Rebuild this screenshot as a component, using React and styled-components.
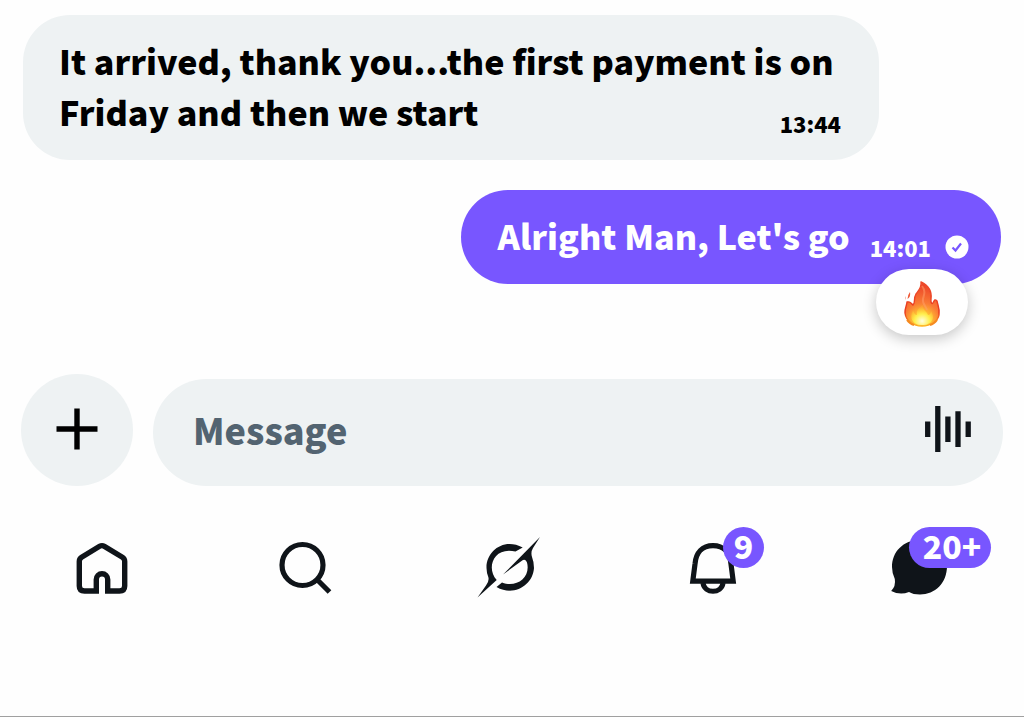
import React from 'react';
import styled, { createGlobalStyle, css } from 'styled-components';

const color = {
  page: '#fefefe',
  surface: '#eef2f3',
  ink: '#0f1419',
  muted: '#536471',
  accent: '#7856ff',
};

const GlobalStyle = createGlobalStyle`
  *, *::before, *::after { box-sizing: border-box; }
  body {
    margin: 0;
    background: ${color.page};
    font-family: 'Noto Sans CJK SC', 'Noto Sans', sans-serif;
    font-weight: 900;
  }
`;

const Page = styled.main`
  display: flex;
  flex-direction: column;
  min-height: 100vh;
  padding-top: 15px;
  border-bottom: 1px solid #a0a0a0;
`;

const Thread = styled.section`
  display: flex;
  flex-direction: column;
  gap: 30px;
  padding: 0 23px;
`;

const Bubble = styled.article`
  position: relative;
  border-radius: 47px;
  font-size: 34px;
  line-height: 51px;
  ${({ $sent }) =>
    $sent
      ? css`
          align-self: flex-end;
          display: flex;
          align-items: flex-start;
          gap: 20px;
          padding: 20px 32px 22px 37px;
          background: ${color.accent};
          color: #fff;
        `
      : css`
          align-self: flex-start;
          display: flow-root;
          max-width: 856px;
          padding: 20px 38px 22px 36px;
          background: ${color.surface};
          color: #000;
        `}
`;

const BubbleText = styled.p`
  display: inline;
  margin: 0;
`;

const Meta = styled.div`
  float: right;
  display: flex;
  align-items: center;
  gap: 14px;
  margin-top: 22px;
  font-size: 22px;
  line-height: 30px;
`;

const Reaction = styled.button`
  position: absolute;
  right: 33px;
  bottom: -51px;
  display: grid;
  place-items: center;
  width: 92px;
  height: 66px;
  padding: 3px 0 0;
  border: 0;
  border-radius: 33px;
  background: #fff;
  box-shadow: 0 4px 14px rgba(0, 0, 0, 0.22);
`;

const Composer = styled.form`
  display: flex;
  align-items: flex-end;
  gap: 20px;
  margin-top: 90px;
  padding: 0 21px;
`;

const AddButton = styled.button`
  flex: none;
  display: grid;
  place-items: center;
  width: 112px;
  height: 112px;
  padding: 0 0 2px;
  border: 0;
  border-radius: 50%;
  background: ${color.surface};
  color: #000;
`;

const Field = styled.div`
  flex: 1;
  min-width: 0;
  display: flex;
  align-items: center;
  height: 107px;
  padding: 0 32px 7px 40px;
  border-radius: 54px;
  background: ${color.surface};
`;

const MessageInput = styled.input`
  flex: 1;
  min-width: 0;
  height: 54px;
  padding: 0;
  border: 0;
  outline: 0;
  background: transparent;
  color: ${color.ink};
  font: inherit;
  font-size: 36px;
  &::placeholder {
    color: ${color.muted};
    opacity: 1;
  }
`;

const VoiceButton = styled.button`
  display: grid;
  padding: 0;
  border: 0;
  background: none;
  color: ${color.ink};
`;

const TabBar = styled.nav`
  display: grid;
  grid-template-columns: repeat(5, 1fr);
  justify-items: center;
  margin-top: 54px;
  padding-right: 4px;
`;

const Tab = styled.a`
  position: relative;
  display: block;
  height: 60px;
  color: ${color.ink};
`;

const Badge = styled.span`
  position: absolute;
  top: -13px;
  left: ${({ $wide }) => ($wide ? 19 : 37)}px;
  display: block;
  width: ${({ $wide }) => ($wide ? 82 : 41)}px;
  height: 41px;
  padding-left: ${({ $wide }) => ($wide ? 4 : 0)}px;
  border-radius: 21px;
  background: ${color.accent};
  color: #fff;
  font-size: 32px;
  line-height: 36px;
  text-align: center;
`;

const Icon = styled.svg`
  display: block;
  overflow: visible;
`;

const CheckIcon = () => (
  <Icon width="24" height="24" viewBox="0 0 24 24" role="img" aria-label="Read">
    <circle cx="12" cy="12" r="11.5" fill="#fff" />
    <path d="M7.500 12.500l3 3 5.500-7" fill="none" stroke={color.accent} strokeWidth="2.2" />
  </Icon>
);

const FireIcon = () => (
  <Icon width="36" height="46" viewBox="0 0 36 46" role="img" aria-label="Fire">
    <defs>
      <radialGradient id="flame" cx="18" cy="40" r="36" gradientUnits="userSpaceOnUse">
        <stop offset="0" stopColor="#fff36b" />
        <stop offset="0.25" stopColor="#ffbd33" />
        <stop offset="0.5" stopColor="#fa7c35" />
        <stop offset="1" stopColor="#ec4429" />
      </radialGradient>
      <linearGradient id="edge" x1="0" y1="0" x2="0" y2="1">
        <stop offset="0" stopColor="#ee4b2b" />
        <stop offset="0.7" stopColor="#e93a1e" />
        <stop offset="1" stopColor="#ffb41f" />
      </linearGradient>
      <radialGradient id="core" cx="0.5" cy="0.8" r="0.7">
        <stop offset="0" stopColor="#fffde0" />
        <stop offset="0.5" stopColor="#fff04f" />
        <stop offset="1" stopColor="#ffc52f" stopOpacity="0.2" />
      </radialGradient>
    </defs>
    <path
      d="M17 1C25 5 28 11 27 18C26.500 22 28 24 29.500 21C30.500 19 31 18 33 20C34 25 36 28 35 34C34 40 27 45 18 45C9 45 2 40 1 32C.500 28 3 24 3 21C7 20 7 23 9 24C12 21 9 18 12 13C15 9 18 6 17 1Z"
      fill="url(#flame)"
      stroke="url(#edge)"
      strokeWidth="1.4"
      strokeLinejoin="round"
    />
    <path d="M18 5C22 10 20 14 19 18C18 23 22 25 23 29" fill="none" stroke="#ffa06c" strokeWidth="2" opacity="0.5" />
    <path
      d="M19 24C18 29 23 30 24 34C26 34 27 32 27 30C32 38 27 44 18 44C8 44 5 37 9 29C10 32 11 34 13 34C12 29 15 27 19 24Z"
      fill="url(#core)"
    />
    <path d="M6 11Q3.500 14 3.500 18Q7 16 6 11ZM2 15Q1 17 2 19Z" fill="#ef5a38" />
    <path d="M3 39Q6 43 10 44M33 39Q30 43 26 44" fill="none" stroke="#f58a20" strokeWidth="2" />
  </Icon>
);

const PlusIcon = () => (
  <Icon width="42" height="42" viewBox="0 0 42 42" aria-hidden="true">
    <path d="M21 0.500V41.500M0.500 21H41.500" stroke="currentColor" strokeWidth="5.4" />
  </Icon>
);

const VoiceIcon = () => (
  <Icon width="46" height="46" viewBox="0 0 46 46" aria-hidden="true">
    <path
      d="M2.700 15.500V31M12.800 0V46M22.900 10.500V36M33 5.200V41M43.200 15.500V31"
      fill="none"
      stroke="currentColor"
      strokeWidth="5.3"
    />
  </Icon>
);

const HomeIcon = () => (
  <Icon width="56" height="56" viewBox="0 0 56 56" aria-hidden="true">
    <path
      d="M22.300 51H10.500Q5.300 51 5.300 46V21.500Q5.300 18.800 7.600 17.300L25.600 6.300Q28 4.900 30.400 6.300L48.400 17.300Q50.700 18.800 50.700 21.500V46Q50.700 51 45.500 51H33.700V39.500A5.700 5.700 0 0 0 22.300 39.500Z"
      fill="none"
      stroke="currentColor"
      strokeWidth="5.400"
    />
  </Icon>
);

const SearchIcon = () => (
  <Icon width="56" height="56" viewBox="0 0 56 56" aria-hidden="true">
    <circle cx="24.500" cy="25" r="20.500" fill="none" stroke="currentColor" strokeWidth="5.2" />
    <path d="M39 39.500L51.500 52" stroke="currentColor" strokeWidth="5.2" />
  </Icon>
);

const GrokIcon = () => (
  <Icon width="64" height="62" viewBox="18 20 64 62" aria-hidden="true">
    <g fill="currentColor">
      <path d="M62.700 27.500C44 17 26 31 26.500 48Q26.600 53 28.300 57Q29.500 61 26 65.500L17.500 77.500L36.700 60C26 49 33 26 55.500 31.500Z" />
      <path d="M80 17L43 54.500L61.500 41Q65.500 38 67 42.500C71 58 56 68 42 62.500L36.500 67C54 77 73 65 74 48Q74 42 72 37Q70.500 32 73 28Z" />
    </g>
  </Icon>
);

const BellIcon = () => (
  <Icon width="56" height="56" viewBox="1 0 56 56" aria-hidden="true">
    <g fill="none" stroke="currentColor" strokeWidth="5.2">
      <path d="M7.800 41.100L10 24C10.800 12.500 17.500 5.600 28 5.600S45.200 12.500 46 24L48.200 41.100Z" />
      <path d="M18 43C19.500 54 36.500 54 38 43" />
    </g>
  </Icon>
);

const ChatIcon = () => (
  <Icon width="56" height="56" viewBox="20 24 56 56" aria-hidden="true">
    <path
      d="M50 24C66 24 77 35 77 50C77 67 65 78.500 50 78.500Q43 78.500 39 76Q30 79.500 21.200 75Q26 70 24.800 63Q22 57 22 51C22 36 33 24 50 24Z"
      fill="currentColor"
    />
  </Icon>
);

const tabs = [
  { name: 'Home', Glyph: HomeIcon },
  { name: 'Search', Glyph: SearchIcon },
  { name: 'Grok', Glyph: GrokIcon },
  { name: 'Notifications', Glyph: BellIcon, count: '9' },
  { name: 'Messages', Glyph: ChatIcon, count: '20+' },
];

export default function App() {
  return (
    <>
      <GlobalStyle />
      <Page>
        <Thread>
          <Bubble>
            <BubbleText>It arrived, thank you...the first payment is on Friday and then we start</BubbleText>
            <Meta>
              <time>13:44</time>
            </Meta>
          </Bubble>
          <Bubble $sent>
            <BubbleText>Alright Man, Let's go</BubbleText>
            <Meta>
              <time>14:01</time>
              <CheckIcon />
            </Meta>
            <Reaction type="button">
              <FireIcon />
            </Reaction>
          </Bubble>
        </Thread>
        <Composer>
          <AddButton type="button" aria-label="Add attachment">
            <PlusIcon />
          </AddButton>
          <Field>
            <MessageInput type="text" placeholder="Message" aria-label="Message" />
            <VoiceButton type="button" aria-label="Record voice message">
              <VoiceIcon />
            </VoiceButton>
          </Field>
        </Composer>
        <TabBar>
          {tabs.map(({ name, Glyph, count }) => (
            <Tab key={name} href={`#${name.toLowerCase()}`} aria-label={name}>
              <Glyph />
              {count && <Badge $wide={count.length > 1}>{count}</Badge>}
            </Tab>
          ))}
        </TabBar>
      </Page>
    </>
  );
}
